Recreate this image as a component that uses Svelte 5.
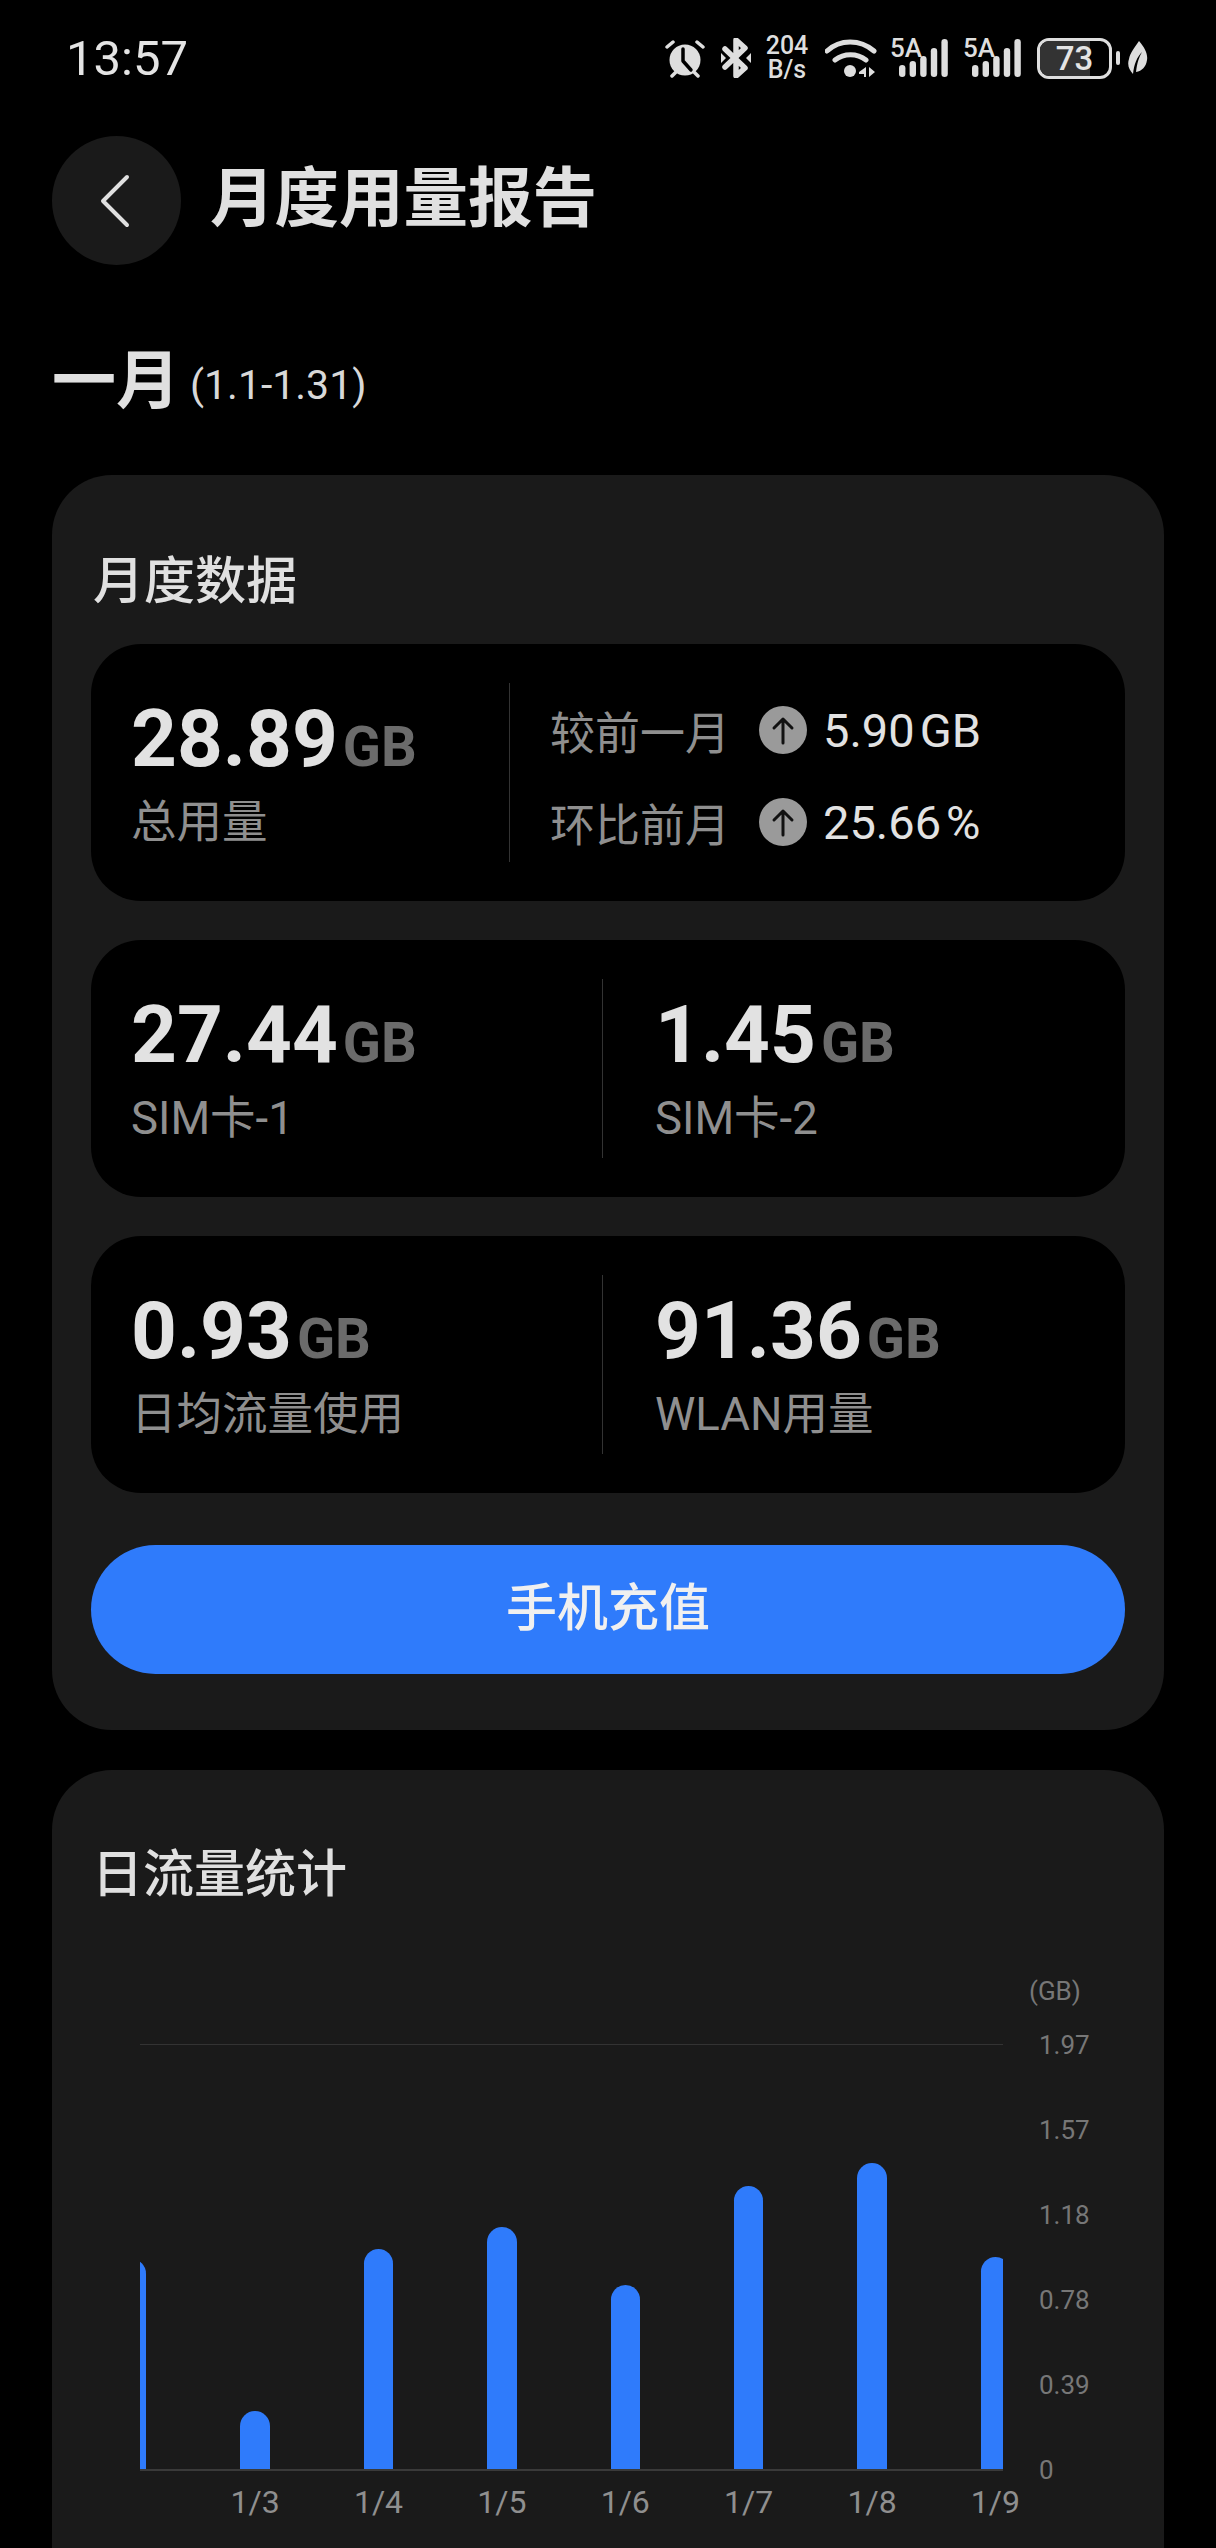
<script lang="ts">
    const bars = [
        { label: "", height: 210 },
        { label: "1/3", height: 58 },
        { label: "1/4", height: 220 },
        { label: "1/5", height: 242 },
        { label: "1/6", height: 184 },
        { label: "1/7", height: 283 },
        { label: "1/8", height: 306 },
        { label: "1/9", height: 212 },
    ];
    const ticks = ["1.97", "1.57", "1.18", "0.78", "0.39", "0"];
    const signalBars = [12, 16, 21, 29, 38];
</script>

{#snippet signal()}
    <div class="signal">
        <span class="signal__tech">5A</span>
        <svg width="49" height="38" viewBox="0 0 49 38" class="signal__bars">
            {#each signalBars as h, i}
                <rect x={i * 10.6} y={38 - h} width="6.4" height={h} rx="3.2" fill="#dedede" />
            {/each}
        </svg>
    </div>
{/snippet}

{#snippet up()}
    <svg class="up" width="48" height="48" viewBox="0 0 48 48">
        <circle cx="24" cy="24" r="24" fill="#9a9a9a" />
        <path d="M24 37V13M15 22l9-9 9 9" fill="none" stroke="#111" stroke-width="3" stroke-linecap="round" stroke-linejoin="round" />
    </svg>
{/snippet}

{#snippet amount(value, label)}
    <div class="stat">
        <div class="stat__value">{value}<span class="stat__unit">GB</span></div>
        <div class="stat__label">{label}</div>
    </div>
{/snippet}

<div class="page">
    <div class="status">
        <span class="status__time">13:57</span>
        <div class="status__icons">
            <svg width="42" height="40" viewBox="0 0 42 40">
                <circle cx="21" cy="22" r="15.5" fill="#dedede" />
                <path d="M19 11v12l8 9" fill="none" stroke="#000" stroke-width="3.5" stroke-linecap="round" stroke-linejoin="round" />
                <path d="M3 9l6-5M39 9l-6-5M8 38l4-4M34 38l-4-4" stroke="#dedede" stroke-width="3.5" stroke-linecap="round" />
            </svg>
            <svg class="status__bt" width="30" height="40" viewBox="0 0 30 40">
                <path d="M4 11l20 19-9 8V2l9 8L4 29" fill="none" stroke="#dedede" stroke-width="5.5" stroke-linecap="round" stroke-linejoin="round" />
                <path d="M0 15l5 5-5 5zM30 15l-5 5 5 5z" fill="#dedede" />
            </svg>
            <div class="speed"><span>204</span><span>B/s</span></div>
            <svg class="status__wifi" width="52" height="42" viewBox="0 0 52 42">
                <path d="M2 14C15 2 35 2 49 14M10 23c9-7 22-7 31 0" fill="none" stroke="#dedede" stroke-width="5" stroke-linecap="round" />
                <circle cx="25" cy="34" r="6" fill="#dedede" />
                <path d="M41 30v10h-2v-3h-5v-2zM44 30l6 5-6 5z" fill="#dedede" />
            </svg>
            {@render signal()}
            {@render signal()}
            <div class="battery">
                <div class="battery__body">
                    <div class="battery__fill"></div>
                    <span class="battery__level">73</span>
                </div>
                <div class="battery__nub"></div>
            </div>
            <svg class="status__leaf" width="20" height="34" viewBox="0 0 20 34">
                <path d="M11 0c6 7 9 13 8 19-1 7-5 11-11 12 1-9 3-15 6-20-5 5-8 12-9 22C1 29-1 24 1 18 2 12 7 6 11 0z" fill="#dedede" />
            </svg>
        </div>
    </div>

    <header class="header">
        <div class="back">
            <svg width="36" height="54" viewBox="0 0 36 54">
                <path d="M30 3L6 27l24 24" fill="none" stroke="#e0e0e0" stroke-width="4" stroke-linecap="round" stroke-linejoin="round" />
            </svg>
        </div>
        <h1 class="header__title">月度用量报告</h1>
    </header>

    <div class="month">
        <span class="month__name">一月</span>
        <span class="month__range">(1.1-1.31)</span>
    </div>

    <section class="card">
        <h2 class="card__title">月度数据</h2>

        <div class="panel">
            <div class="panel__left">
                {@render amount("28.89", "总用量")}
            </div>
            <div class="divider"></div>
            <div class="compare">
                <div class="compare__row">
                    <span class="compare__label">较前一月</span>
                    {@render up()}
                    <span class="compare__value">5.90<span class="compare__unit">GB</span></span>
                </div>
                <div class="compare__row">
                    <span class="compare__label">环比前月</span>
                    {@render up()}
                    <span class="compare__value">25.66<span class="compare__unit">%</span></span>
                </div>
            </div>
        </div>

        <div class="panel panel--split">
            {@render amount("27.44", "SIM卡-1")}
            <div class="divider"></div>
            {@render amount("1.45", "SIM卡-2")}
        </div>

        <div class="panel panel--split">
            {@render amount("0.93", "日均流量使用")}
            <div class="divider"></div>
            {@render amount("91.36", "WLAN用量")}
        </div>

        <button class="recharge">手机充值</button>
    </section>

    <section class="card card--chart">
        <h2 class="card__title card__title--chart">日流量统计</h2>

        <div class="chart">
            <div class="chart__main">
                <div class="plot">
                    <div class="plot__grid"></div>
                    <div class="plot__bars">
                        {#each bars as bar}
                            <div class="plot__bar" style:height="{bar.height}px"></div>
                        {/each}
                    </div>
                </div>
                <div class="xaxis">
                    {#each bars as bar}
                        <span class="xaxis__label">{bar.label}</span>
                    {/each}
                </div>
            </div>
            <div class="yaxis">
                <span class="yaxis__unit">(GB)</span>
                {#each ticks as tick}
                    <span class="yaxis__tick">{tick}</span>
                {/each}
            </div>
        </div>
    </section>
</div>

<style>
    :global(body) {
        margin: 0;
        background: #000;
    }

    .page {
        width: 1216px;
        height: 2548px;
        overflow: hidden;
        background: #000;
        color: #e0e0e0;
        font-family: Roboto, "Noto Sans CJK SC", sans-serif;
        box-sizing: border-box;
    }

    .status {
        height: 116px;
        padding: 0 68px 0 66px;
        display: flex;
        justify-content: space-between;
        align-items: center;
        box-sizing: border-box;
    }

    .status__time {
        font-size: 49px;
        font-weight: 400;
        color: #e4e4e4;
    }

    .status__icons {
        display: flex;
        align-items: center;
        color: #dedede;
    }

    .status__bt {
        margin-left: 15px;
    }

    .speed {
        margin-left: 13px;
        width: 46px;
        display: flex;
        flex-direction: column;
        align-items: center;
        font-size: 25px;
        font-weight: 500;
        line-height: 24px;
    }

    .status__wifi {
        margin-left: 15px;
    }

    .signal {
        margin-left: 13px;
        width: 58px;
        height: 42px;
        display: flex;
        position: relative;
    }

    .signal + .signal {
        margin-left: 15px;
    }

    .signal__tech {
        position: absolute;
        left: 0;
        top: -3px;
        font-size: 26px;
        line-height: 28px;
        font-weight: 500;
    }

    .signal__bars {
        position: absolute;
        right: 0;
        bottom: 2px;
    }

    .battery {
        margin-left: 16px;
        display: flex;
        align-items: center;
        gap: 4px;
    }

    .battery__body {
        position: relative;
        width: 75px;
        height: 41px;
        border: 3px solid #dedede;
        border-radius: 12px;
        box-sizing: border-box;
        overflow: hidden;
        display: flex;
        align-items: center;
        justify-content: center;
    }

    .battery__fill {
        position: absolute;
        left: 0;
        top: 0;
        bottom: 0;
        width: 73%;
        background: #333;
    }

    .battery__level {
        position: relative;
        font-size: 33px;
        font-weight: 500;
        line-height: 1;
        color: #e4e4e4;
    }

    .battery__nub {
        width: 4px;
        height: 14px;
        border-radius: 2px;
        background: #dedede;
    }

    .status__leaf {
        margin-left: 8px;
    }

    .header {
        padding: 20px 52px 0;
        display: flex;
        align-items: center;
        gap: 29px;
    }

    .back {
        width: 129px;
        height: 129px;
        border-radius: 50%;
        background: #1a1a1a;
        display: flex;
        align-items: center;
        justify-content: center;
    }

    .back svg {
        margin-left: -4px;
    }

    .header__title {
        margin: 0;
        padding-bottom: 16px;
        font-size: 64.5px;
        font-weight: 700;
        color: #e0e0e0;
    }

    .month {
        margin-top: 72px;
        padding: 0 52px;
        height: 96px;
        display: flex;
        align-items: center;
        gap: 10px;
    }

    .month__name {
        margin-bottom: 20px;
        font-size: 64px;
        font-weight: 700;
    }

    .month__range {
        margin-top: 0;
        font-size: 41px;
        color: #d8d8d8;
    }

    .card {
        margin: 42px 52px 0;
        padding: 0 39px 56px;
        background: #1a1a1a;
        border-radius: 60px;
    }

    .card--chart {
        margin-top: 40px;
        height: 900px;
    }

    .card__title {
        margin: 0;
        height: 169px;
        padding: 78px 2px 0;
        box-sizing: border-box;
        font-size: 51px;
        line-height: 58px;
        font-weight: 500;
        color: #e0e0e0;
    }

    .card__title--chart {
        height: auto;
        padding: 76px 1px 0;
    }

    .panel {
        height: 257px;
        margin-bottom: 39px;
        padding: 0 40px;
        background: #000;
        border-radius: 50px;
        display: flex;
        align-items: center;
        box-sizing: border-box;
    }

    .panel__left {
        width: 378px;
    }

    .panel--split .stat:first-child {
        flex: none;
        width: 471px;
    }

    .panel--split .stat:last-child {
        padding-left: 52px;
    }

    .divider {
        width: 1px;
        height: 179px;
        background: #333;
        flex: none;
    }

    .stat__value {
        font-size: 80px;
        line-height: 90px;
        font-weight: 700;
        color: #e2e2e2;
    }

    .stat__unit {
        margin-left: 5px;
        font-size: 56px;
        font-weight: 700;
        color: #6b6b6b;
    }

    .stat__label {
        margin-top: 3px;
        font-size: 45.5px;
        line-height: 56px;
        color: #8f8f8f;
    }

    .compare {
        padding-top: 7px;
        padding-left: 40px;
        display: flex;
        flex-direction: column;
        gap: 42px;
    }

    .compare__row {
        height: 50px;
        display: flex;
        align-items: center;
    }

    .compare__label {
        width: 209px;
        font-size: 45px;
        color: #8f8f8f;
    }

    .up {
        flex: none;
    }

    .compare__value {
        margin-left: 16px;
        font-size: 47px;
        color: #e2e2e2;
    }

    .compare__unit {
        margin-left: 5px;
    }

    .recharge {
        display: block;
        width: 100%;
        height: 129px;
        margin-top: 52px;
        padding: 0 0 12px;
        border: none;
        border-radius: 65px;
        background: #2f7bfb;
        color: #f0f0f0;
        font-family: inherit;
        font-size: 51px;
        font-weight: 500;
    }

    .chart {
        margin-top: 66px;
        display: flex;
    }

    .chart__main {
        margin-left: 49px;
        width: 863px;
    }

    .plot {
        margin-top: 74px;
        height: 425px;
        position: relative;
        overflow: hidden;
        border-bottom: 2px solid #3a3a3a;
    }

    .plot__grid {
        height: 1px;
        background: #333;
    }

    .plot__bars {
        height: 424px;
        display: flex;
        align-items: flex-end;
        gap: 94px;
        margin-left: -23px;
    }

    .plot__bar {
        flex: none;
        width: 29.4px;
        background: #2f7bfb;
        border-radius: 15px 15px 0 0;
    }

    .xaxis {
        display: flex;
        margin-left: -70px;
        margin-top: 9px;
    }

    .xaxis__label {
        flex: none;
        width: 123.4px;
        text-align: center;
        font-size: 32px;
        line-height: 44px;
        color: #8f8f8f;
    }

    .yaxis {
        margin-left: 36px;
        display: flex;
        flex-direction: column;
        align-items: flex-start;
    }

    .yaxis__unit {
        margin-left: -10px;
        height: 33px;
        font-size: 26px;
        line-height: 43px;
        color: #777;
    }

    .yaxis__tick {
        height: 85px;
        font-size: 26px;
        line-height: 85px;
        color: #777;
    }
</style>
